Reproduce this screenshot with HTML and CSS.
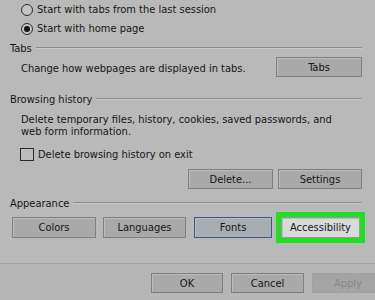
FILE: index.html
```html
<!DOCTYPE html>
<html lang="en">
<head>
  <meta charset="UTF-8">
  <title>Internet Options</title>
  <link rel="stylesheet" href="styles.css">
</head>
<body>
  <div class="panel">
    <!-- Startup -->
    <div class="option-row">
      <span class="radio"></span>
      <span>Start with tabs from the last session</span>
    </div>
    <div class="option-row">
      <span class="radio checked"></span>
      <span>Start with home page</span>
    </div>

    <!-- Tabs -->
    <div class="legend legend-tabs"><span>Tabs</span><i class="rule"></i></div>
    <div class="tabs-row">
      <span class="tabs-text">Change how webpages are displayed in tabs.</span>
      <button class="btn btn-tabs">Tabs</button>
    </div>

    <!-- Browsing history -->
    <div class="legend legend-history"><span>Browsing history</span><i class="rule"></i></div>
    <p class="desc">Delete temporary files, history, cookies, saved passwords, and<br>web form information.</p>
    <div class="option-row check-row">
      <span class="checkbox"></span>
      <span>Delete browsing history on exit</span>
    </div>
    <div class="btn-row right">
      <button class="btn btn-delete">Delete...</button>
      <button class="btn btn-settings">Settings</button>
    </div>

    <!-- Appearance -->
    <div class="legend legend-appearance"><span>Appearance</span><i class="rule"></i></div>
    <div class="btn-row appearance">
      <button class="btn btn-colors">Colors</button>
      <button class="btn btn-languages">Languages</button>
      <button class="btn btn-fonts">Fonts</button>
      <button class="btn btn-access">Accessibility</button>
    </div>
  </div>

  <div class="footer">
    <button class="btn btn-ok">OK</button>
    <button class="btn btn-cancel">Cancel</button>
    <button class="btn btn-apply">Apply</button>
  </div>
</body>
</html>
```

FILE: styles.css
```css
* {
  margin: 0;
  padding: 0;
  box-sizing: border-box;
  font-family: "DejaVu Sans Condensed", "DejaVu Sans", sans-serif;
}
body {
  background: #b9b9b9;
  color: #161616;
  font-size: 11px;
  width: 375px;
  height: 300px;
  overflow: hidden;
}
.panel {
  height: 263px;
  padding-left: 10px;
  padding-right: 13px;
}
.option-row {
  display: flex;
  align-items: center;
  height: 19px;
  padding-left: 11px;
  gap: 4px;
}
.radio {
  width: 12px;
  height: 12px;
  border: 1px solid #2a2a2a;
  border-radius: 50%;
  background: #c4c4c4;
  position: relative;
}
.radio.checked::after {
  content: "";
  position: absolute;
  left: 2px;
  top: 2px;
  width: 6px;
  height: 6px;
  border-radius: 50%;
  background: #111;
}
.legend {
  display: flex;
  align-items: center;
  height: 18px;
  gap: 4px;
}
.rule {
  flex: 1;
  height: 1px;
  background: #8c8c8c;
  border-bottom: 1px solid #c8c8c8;
  box-sizing: content-box;
}
.legend-tabs {
  margin-top: 1px;
}
.tabs-row {
  display: flex;
  justify-content: space-between;
  height: 20px;
  padding-left: 11px;
}
.tabs-text {
  margin-top: 5px;
}
.btn {
  height: 20px;
  background: #a9a9a9;
  border: 1px solid #7f7f7f;
  box-shadow: inset 1px 1px 0 #bcbcbc;
  color: #161616;
  font-size: 11px;
  text-align: center;
}
.btn-tabs {
  width: 86px;
}
.legend-history {
  margin-top: 13px;
}
.desc {
  margin-top: 6px;
  padding-left: 11px;
  line-height: 12px;
}
.check-row {
  margin-top: 8px;
  height: 16px;
  padding-left: 10px;
}
.checkbox {
  width: 14px;
  height: 13px;
  border: 1px solid #2a2a2a;
  background: #bdbdbd;
}
.btn-row {
  display: flex;
  margin-top: 7px;
}
.btn-row.right {
  justify-content: flex-end;
  gap: 5px;
}
.btn-delete {
  width: 85px;
}
.btn-settings {
  width: 84px;
}
.legend-appearance {
  margin-top: 5px;
}
.appearance {
  margin-top: 5px;
  padding-left: 2px;
}
.appearance .btn {
  height: 21px;
}
.btn-colors {
  width: 84px;
}
.btn-languages {
  width: 83px;
  margin-left: 7px;
}
.btn-fonts {
  width: 78px;
  margin-left: 8px;
  border-color: #3c5a86;
  background: #a8adb2;
}
.btn-access {
  width: 79px;
  margin-left: 9px;
  background: #dadada;
  border-color: #9a9a9a;
  outline: 5px solid #1ee01e;
}
.footer {
  height: 37px;
  border-top: 1px solid #a3a3a3;
  background: #b6b6b6;
  display: flex;
  gap: 8px;
  padding-left: 151px;
  padding-top: 9px;
  overflow: hidden;
}
.btn-ok {
  width: 72px;
  flex-shrink: 0;
}
.btn-cancel {
  width: 73px;
  flex-shrink: 0;
}
.btn-apply {
  width: 72px;
  flex-shrink: 0;
  background: #a4a4a4;
  border-color: #a0a0a0;
  box-shadow: none;
  color: #888;
}
```
